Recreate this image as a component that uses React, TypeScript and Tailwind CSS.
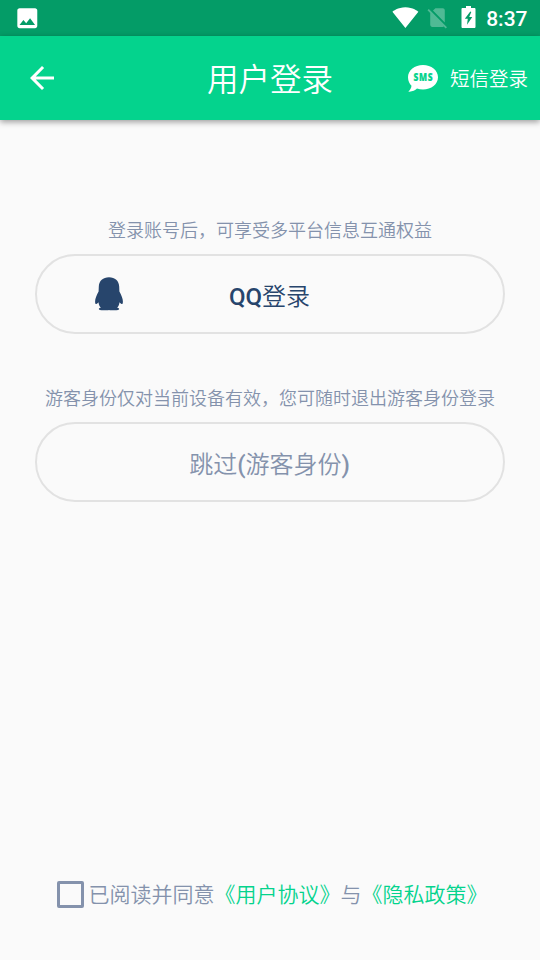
import React from 'react';

function StatusBar() {
    return (
        <div className="h-9 bg-[#049c67] flex items-center justify-between pl-[13.6px] pr-[12.5px] text-white">
            <svg className="w-[26.6px] h-[26.6px]" viewBox="0 0 24 24" fill="currentColor">
                <path d="M21 19V5c0-1.1-.9-2-2-2H5c-1.1 0-2 .9-2 2v14c0 1.1.9 2 2 2h14c1.1 0 2-.9 2-2zM8.5 13.5l2.5 3.01L14.5 12l4.5 6H5l3.5-4.5z"/>
            </svg>
            <div className="flex items-center">
                <svg className="w-[26.8px] h-[26.8px] -mt-[2px]" viewBox="0 0 24 24" fill="currentColor">
                    <path d="M12.01 21.49L23.64 7c-.45-.34-4.93-4-11.64-4C5.28 3 .81 6.66.36 7l11.63 14.49.01.01.01-.01z"/>
                </svg>
                <svg className="w-[25px] h-[25px] ml-[6.2px] -mt-px opacity-30" viewBox="0 0 24 24" fill="currentColor">
                    <path d="M18.99 5c0-1.1-.89-2-1.99-2h-7L7.66 5.34 19 16.68 18.99 5zM3.65 3.88L2.38 5.15 5 7.77V19c0 1.1.9 2 2 2h10.01c.35 0 .67-.1.96-.26l1.88 1.88 1.27-1.27L3.65 3.88z"/>
                </svg>
                <svg className="w-[15px] h-[22px] ml-[10.3px] -mt-0.5" viewBox="0 0 15 22" fill="currentColor" fillRule="evenodd">
                    <path d="M5 0h5v2h3.5c.5 0 1 .5 1 1v18c0 .5-.5 1-1 1h-12c-.5 0-1-.5-1-1V3c0-.5.5-1 1-1H5zM9.3 5.5L3.8 12.8h3l-.8 6L11.3 11H8.2l2.1-5z"/>
                </svg>
                <span className="ml-[10.5px] pt-[1px] text-[21px] leading-9 font-medium font-['Roboto',sans-serif]">8:37</span>
            </div>
        </div>
    );
}

function Header() {
    return (
        <header className="h-[84px] bg-[#04d38d] shadow-[0_2px_6px_rgba(0,0,0,0.38)] grid grid-cols-[1fr_auto_1fr] items-center pl-6 pr-3 text-white">
            <svg className="w-9 h-9" viewBox="0 0 24 24" fill="currentColor">
                <path d="M20 11H7.83l5.59-5.59L12 4l-8 8 8 8 1.41-1.41L7.83 13H20v-2z"/>
            </svg>
            <h1 className="text-[31.5px] leading-[40px] -ml-1.5 mr-1.5 pb-0.5">用户登录</h1>
            <div className="flex items-center justify-end">
                <svg className="w-[30px] h-[27px] overflow-visible" viewBox="0 0 30 27">
                    <path fill="#fff" d="M15 0C6.7 0 0 5.4 0 12.2c0 3.9 1.7 6.6 3.5 8.5C3.3 23 2 25 .2 26.6c3.6.4 6.7-.8 8.8-3 1.9.6 3.9.9 6 .9 8.300 0 15-5.500 15-12.300S23.300 0 15 0z"/>
                    <text x="5.6" y="16.2" textLength="19.6" lengthAdjust="spacingAndGlyphs" fill="#04d38d" stroke="#04d38d" strokeWidth="0.2" className="text-[10.5px] tracking-[0.8px] font-extrabold font-['Open_Sans',sans-serif]">SMS</text>
                </svg>
                <span className="ml-3 text-[19.5px] leading-7 whitespace-nowrap">短信登录</span>
            </div>
        </header>
    );
}

function PenguinIcon() {
    return (
        <svg className="w-7 h-[34px]" viewBox="0 0 28 34" fill="currentColor">
            <path d="M14 .3C8 .3 4 4 3.8 9.5L3.6 14.5C1.5 18.5.1 21.5.1 24.5c0 1.6.2 2.5.7 2.5.9 0 1.9-.9 2.7-1.8.2 2.3.9 4 2.3 5.6-1.5.3-2 .8-2 1.3 0 .9 1.5 1.2 4.9 1.2 2.5 0 4.5-.1 5.3-.4.8.3 2.8.4 5.3.4 3.4 0 4.9-.3 4.9-1.2 0-.5-.5-1-2-1.3 1.4-1.6 2.1-3.3 2.3-5.6.8.9 1.8 1.8 2.7 1.8.5 0 .7-.9.7-2.5 0-3-1.4-6-3.5-10l-.2-5C24 4 20 .3 14 .3z"/>
        </svg>
    );
}

export default function App() {
    return (
        <div className="w-[540px] h-[960px] bg-[#fafafa] flex flex-col overflow-hidden font-[350] font-['Noto_Sans_CJK_SC',sans-serif]">
            <StatusBar/>
            <Header/>
            <main className="flex-1 flex flex-col px-[35px] text-[#8492ac]">
                <p className="mt-24 text-lg leading-[26px] text-center whitespace-nowrap">登录账号后，可享受多平台信息互通权益</p>
                <button className="mt-3 h-20 rounded-full border-2 border-[#e2e2e2] grid grid-cols-[1fr_auto_1fr] items-center text-[#27456c]">
                    <span className="pl-[58px]"><PenguinIcon/></span>
                    <span className="text-2xl leading-9 pt-1.5 -ml-[0.5px] mr-[0.5px] font-['Roboto','Noto_Sans_CJK_SC',sans-serif]"><span className="font-medium">QQ</span>登录</span>
                </button>
                <p className="mt-[50px] -mx-4 text-lg leading-[26px] text-center whitespace-nowrap">游客身份仅对当前设备有效，您可随时退出游客身份登录</p>
                <button className="mt-3 h-20 rounded-full border-2 border-[#e2e2e2] text-2xl leading-9 pt-1.5 pr-px font-['Roboto','Noto_Sans_CJK_SC',sans-serif]">
                    跳过<span className="font-medium">(</span>游客身份<span className="font-medium">)</span>
                </button>
                <div className="mt-auto mb-[51px] pl-[22px] flex items-center text-[21px] leading-8 whitespace-nowrap">
                    <span className="w-[27px] h-[27px] mr-[4.5px] -mt-px border-[3px] border-[#8492ac] rounded-[2px]"/>
                    <span className="flex -mt-1">
                        <span>已阅读并同意</span>
                        <a className="text-[#04d38d]">《用户协议》</a>
                        <span>与</span>
                        <a className="text-[#04d38d]">《隐私政策》</a>
                    </span>
                </div>
            </main>
        </div>
    );
}
